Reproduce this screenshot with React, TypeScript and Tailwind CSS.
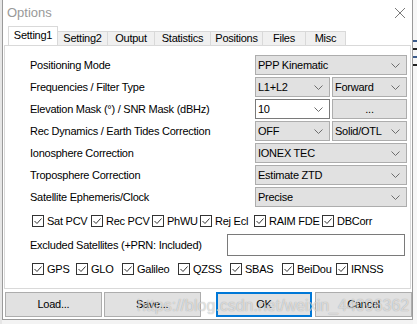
import React from "react";

const TABS = ["Setting1", "Setting2", "Output", "Statistics", "Positions", "Files", "Misc"];
const TAB_W = ["w-[50px]", "w-[50px]", "w-[47px]", "w-[56px]", "w-[52px]", "w-[43px]", "w-[40px]"];

const OPTS = [
  { label: "Sat PCV", w: "w-[59px]" },
  { label: "Rec PCV", w: "w-[61px]" },
  { label: "PhWU", w: "w-[48px]" },
  { label: "Rej Ecl", w: "w-[54px]" },
  { label: "RAIM FDE", w: "w-[68px]" },
  { label: "DBCorr", w: "w-[50px]" },
];

const GNSS = [
  { label: "GPS", w: "w-[44px]" },
  { label: "GLO", w: "w-[46px]" },
  { label: "Galileo", w: "w-[56px]" },
  { label: "QZSS", w: "w-[52px]" },
  { label: "SBAS", w: "w-[52px]" },
  { label: "BeiDou", w: "w-[54px]" },
  { label: "IRNSS", w: "w-[48px]" },
];

function Chevron() {
  return (
    <svg width="9" height="5" viewBox="0 0 9 5" className="shrink-0">
      <polyline points="0.5,0.5 4.5,4.5 8.5,0.5" fill="none" stroke="#6d6d6d" strokeWidth="1" />
    </svg>
  );
}

function Combo({ value, w, white }: { value: string; w: string; white?: boolean }) {
  return (
    <div
      className={`${w} flex h-5 items-center justify-between pl-[2px] pr-[6px] border ${
        white ? "border-[#7a7a7a] bg-white" : "border-[#adadad] bg-[#e1e1e1]"
      }`}
    >
      <span>{value}</span>
      <Chevron />
    </div>
  );
}

function Check({ label, w }: { label: string; w: string }) {
  return (
    <span className={`${w} flex items-center gap-[3px] shrink-0`}>
      <svg width="12" height="12" viewBox="0 0 12 12" className="shrink-0">
        <rect x="0.5" y="0.5" width="11" height="11" fill="white" stroke="#333333" />
        <polyline points="2.5,6 5,8.5 9.5,3.5" fill="none" stroke="#333333" strokeWidth="1" />
      </svg>
      <span className="whitespace-nowrap">{label}</span>
    </span>
  );
}

function Row({ label, children }: { label: string; children: React.ReactNode }) {
  return (
    <div className="flex h-5 items-center justify-between">
      <span>{label}</span>
      <div className="flex w-[152px] gap-[2px]">{children}</div>
    </div>
  );
}

export default function App() {
  return (
    <div className="relative flex h-[324px] w-[417px] overflow-hidden bg-[#f3f3f3] font-['Liberation_Sans',sans-serif] text-[11px] tracking-[-0.25px] text-black">
      {/* left background */}
      <div className="w-[2px] shrink-0 bg-[#e6e6e6]" />

      {/* dialog */}
      <div className="flex h-[320px] w-[411px] shrink-0 flex-col border-x border-b border-[#9a9a9a] bg-white">
        {/* Title bar */}
        <div className="flex h-[26px] items-center justify-between pl-[4px] pr-[6px]">
          <span className="text-[13px] tracking-normal text-[#999999]">Options</span>
          <svg width="12" height="12" viewBox="0 0 12 12">
            <path d="M1 1 L11 11 M11 1 L1 11" stroke="#7a7a7a" strokeWidth="1" />
          </svg>
        </div>

        {/* Tabs */}
        <div className="flex h-[19px] items-end pl-[5px]">
          {TABS.map((t, i) => (
            <div
              key={t}
              className={`${TAB_W[i]} flex items-center justify-center border-t border-r border-[#d9d9d9] ${
                i === 0 ? "h-[19px] border-l bg-white pb-[2px]" : "h-[14px] bg-[#f0f0f0]"
              }`}
            >
              {t}
            </div>
          ))}
        </div>

        {/* Panel */}
        <div className="mx-[1px] flex h-[244px] flex-col border border-[#d9d9d9] pl-[25px] pr-[3px] pt-[9px]">
          <div className="flex flex-col gap-[2px]">
            <Row label="Positioning Mode">
              <Combo value="PPP Kinematic" w="w-[152px]" />
            </Row>
            <Row label="Frequencies / Filter Type">
              <Combo value="L1+L2" w="w-[75px]" />
              <Combo value="Forward" w="w-[75px]" />
            </Row>
            <Row label="Elevation Mask (°) / SNR Mask (dBHz)">
              <Combo value="10" w="w-[75px]" white />
              <div className="flex h-5 w-[75px] items-center justify-center border border-[#adadad] bg-[#e1e1e1]">
                ...
              </div>
            </Row>
            <Row label="Rec Dynamics / Earth Tides Correction">
              <Combo value="OFF" w="w-[75px]" />
              <Combo value="Solid/OTL" w="w-[75px]" />
            </Row>
            <Row label="Ionosphere Correction">
              <Combo value="IONEX TEC" w="w-[152px]" />
            </Row>
            <Row label="Troposphere Correction">
              <Combo value="Estimate ZTD" w="w-[152px]" />
            </Row>
            <Row label="Satellite Ephemeris/Clock">
              <Combo value="Precise" w="w-[152px]" />
            </Row>
          </div>

          <div className="mt-[4px] flex h-5 items-center pl-[2px]">
            {OPTS.map((o) => (
              <Check key={o.label} {...o} />
            ))}
          </div>

          <div className="mt-[3px] flex h-[22px] items-center justify-between pr-[2px]">
            <span>Excluded Satellites (+PRN: Included)</span>
            <div className="h-[22px] w-[178px] border border-[#7a7a7a] bg-white" />
          </div>

          <div className="mt-[3px] flex h-5 items-center pl-[2px]">
            {GNSS.map((o) => (
              <Check key={o.label} {...o} />
            ))}
          </div>
        </div>

        {/* Buttons */}
        <div className="mt-[3px] flex pl-[2px]">
          <button className="flex h-[25px] w-[97px] items-center justify-center border border-[#adadad] bg-[#e1e1e1]">
            Load...
          </button>
          <button className="ml-[2px] flex h-[25px] w-[97px] items-center justify-center border border-[#adadad] bg-[#e1e1e1]">
            Save...
          </button>
          <button className="ml-[15px] flex h-[25px] w-[97px] items-center justify-center border-2 border-[#0078d7] bg-[#e1e1e1]">
            OK
          </button>
          <button className="ml-[3px] flex h-[25px] w-[97px] items-center justify-center border border-[#adadad] bg-[#e1e1e1]">
            Cancel
          </button>
        </div>
      </div>

      {/* right background */}
      <div className="flex w-[4px] shrink-0 flex-col gap-[6px] bg-[#f7f7f7] pt-[40px]">
        <div className="h-[2px] w-[4px] bg-[#3a5a8a]" />
        <div className="h-[2px] w-[4px] bg-[#222222]" />
        <div className="h-[2px] w-[4px] bg-[#3a5a8a]" />
        <div className="h-[2px] w-[4px] bg-[#222222]" />
      </div>

      {/* watermark */}
      <span className="pointer-events-none absolute left-[137px] top-[294px] whitespace-nowrap text-[16px] tracking-normal text-white/60 [text-shadow:0_0_1px_rgba(0,0,0,0.35)]">
        https://blog.csdn.net/weixin_44096362
      </span>
    </div>
  );
}
